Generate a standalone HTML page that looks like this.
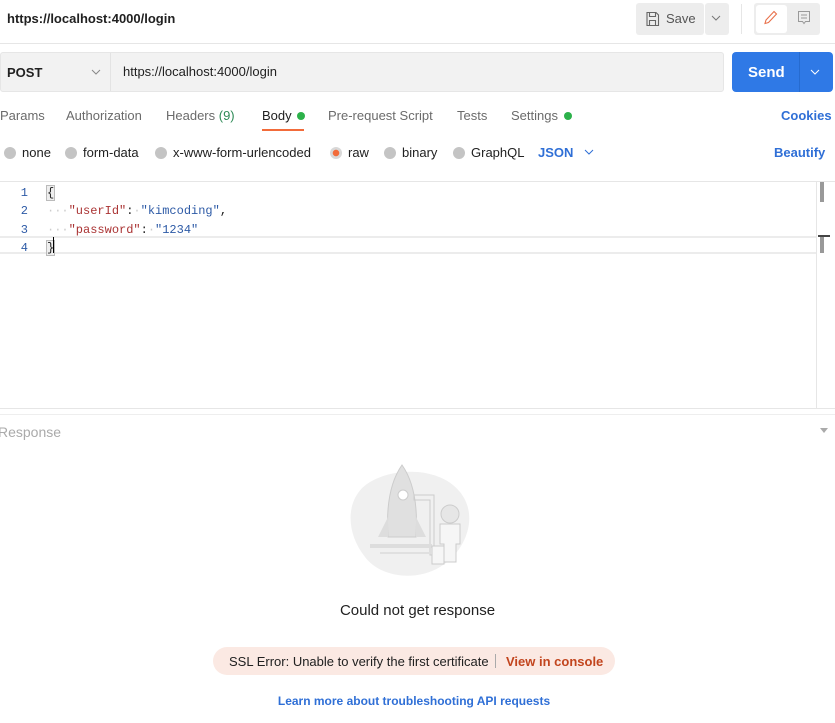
<!DOCTYPE html>
<html><head><meta charset="utf-8"><style>
*{box-sizing:border-box;margin:0;padding:0}
body{width:835px;height:723px;overflow:hidden;background:#fff;font-family:"Liberation Sans",sans-serif;font-size:13px;color:#212121;position:relative}
.a{position:absolute;white-space:nowrap}
.mono{font-family:"Liberation Mono",monospace;font-size:12px}
.dot{display:inline-block;width:12px;height:12px;border-radius:50%;background:#c4c4c4;vertical-align:-2px;margin-right:6px}
</style></head><body>
<div class="a" style="left:7px;top:11px;font-weight:bold;font-size:13px">https://localhost:4000/login</div>
<div class="a" style="left:636px;top:3px;width:68px;height:32px;background:#ededed;border-radius:3px"></div>
<svg class="a" style="left:645px;top:11px" width="15" height="16" viewBox="0 0 15 16"><path d="M2 1.5h9l2.5 2.5v10.5H2z M4.5 1.5v4h6v-4 M4.5 14.5v-5h6v5" fill="none" stroke="#666" stroke-width="1.1"/></svg>
<div class="a" style="left:666px;top:11px;color:#555">Save</div>
<div class="a" style="left:705px;top:3px;width:24px;height:32px;background:#ededed;border-radius:3px"></div>
<svg class="a" style="left:711px;top:15px" width="10" height="7"><path d="M1 1l4 4 4-4" fill="none" stroke="#777"/></svg>
<div class="a" style="left:741px;top:4px;width:1px;height:30px;background:#e6e6e6"></div>
<div class="a" style="left:754px;top:3px;width:66px;height:32px;background:#ededed;border-radius:3px"></div>
<div class="a" style="left:756px;top:5px;width:31px;height:28px;background:#fff;border-radius:3px"></div>
<svg class="a" style="left:763px;top:10px" width="15" height="16"><path d="M11 1.5l2.5 2.5-8 8.5-3.5 1 1-3.5z" fill="none" stroke="#e8704a" stroke-width="1.1"/></svg>
<svg class="a" style="left:797px;top:10px" width="14" height="16"><path d="M1.5 1.5h11v10h-4l-1.5 2-1.5-2h-4z M4 5h6 M4 8h6" fill="none" stroke="#999" stroke-width="1"/></svg>
<div class="a" style="left:0;top:43px;width:835px;height:1px;background:#e6e6e6"></div>

<div class="a" style="left:0;top:52px;width:724px;height:40px;background:#f2f2f2;border:1px solid #e6e6e6;border-radius:3px"></div>
<div class="a" style="left:110px;top:53px;width:1px;height:38px;background:#e3e3e3"></div>
<div class="a" style="left:7px;top:65px;font-weight:bold">POST</div>
<svg class="a" style="left:91px;top:69px" width="10" height="7"><path d="M1 1l4 4 4-4" fill="none" stroke="#888"/></svg>
<div class="a" style="left:123px;top:64px">https://localhost:4000/login</div>
<div class="a" style="left:732px;top:52px;width:101px;height:40px;background:#2f79e6;border-radius:4px"></div>
<div class="a" style="left:799px;top:52px;width:1px;height:40px;background:#266bd0"></div>
<div class="a" style="left:748px;top:64px;color:#fff;font-weight:bold;font-size:15px">Send</div>
<svg class="a" style="left:810px;top:69px" width="10" height="7"><path d="M1 1l4 4 4-4" fill="none" stroke="#fff"/></svg>

<div class="a" style="left:0;top:108px;color:#6b6b6b">Params</div>
<div class="a" style="left:66px;top:108px;color:#6b6b6b">Authorization</div>
<div class="a" style="left:166px;top:108px;color:#6b6b6b">Headers <span style="color:#2e8b57">(9)</span></div>
<div class="a" style="left:262px;top:108px;color:#212121">Body <span style="display:inline-block;width:8px;height:8px;border-radius:50%;background:#2cb14a;margin-left:2px"></span></div>
<div class="a" style="left:262px;top:129px;width:42px;height:2px;background:#f26b3a"></div>
<div class="a" style="left:328px;top:108px;color:#6b6b6b">Pre-request Script</div>
<div class="a" style="left:457px;top:108px;color:#6b6b6b">Tests</div>
<div class="a" style="left:511px;top:108px;color:#6b6b6b">Settings <span style="display:inline-block;width:8px;height:8px;border-radius:50%;background:#2cb14a;margin-left:2px"></span></div>
<div class="a" style="left:781px;top:108px;color:#2f6fd6;font-weight:bold">Cookies</div>

<div class="a" style="left:4px;top:145px"><span class="dot"></span>none</div>
<div class="a" style="left:65px;top:145px"><span class="dot"></span>form-data</div>
<div class="a" style="left:155px;top:145px"><span class="dot"></span>x-www-form-urlencoded</div>
<div class="a" style="left:330px;top:145px"><span class="dot" style="background:radial-gradient(#f26b3a 3px,#d8d8d8 3.5px)"></span>raw</div>
<div class="a" style="left:384px;top:145px"><span class="dot"></span>binary</div>
<div class="a" style="left:453px;top:145px"><span class="dot"></span>GraphQL</div>
<div class="a" style="left:538px;top:145px;color:#2f6fd6;font-weight:bold">JSON</div>
<svg class="a" style="left:584px;top:149px" width="10" height="7"><path d="M1 1l4 4 4-4" fill="none" stroke="#2f6fd6"/></svg>
<div class="a" style="left:774px;top:145px;color:#2f6fd6;font-weight:bold">Beautify</div>

<div class="a" style="left:0;top:181px;width:835px;height:1px;background:#e6e6e6"></div>
<div class="a" style="left:0;top:408px;width:835px;height:1px;background:#e6e6e6"></div>
<div class="a" style="left:816px;top:181px;width:1px;height:228px;background:#e6e6e6"></div>
<div class="a" style="left:820px;top:182px;width:4px;height:20px;background:#999"></div>
<div class="a" style="left:818px;top:235px;width:12px;height:2px;background:#444"></div>
<div class="a" style="left:820px;top:237px;width:4px;height:16px;background:#999"></div>
<div class="a" style="left:0;top:236px;width:816px;height:18px;border-top:2px solid #ececec;border-bottom:2px solid #ececec"></div>
<div class="a mono" style="left:18px;top:184px;color:#2d5aa6;line-height:18.3px;text-align:right;width:10px">1<br>2<br>3<br>4</div>
<div class="a mono" style="left:47px;top:184px;line-height:18.3px"><span style="background:#eee;outline:1px solid #bbb">{</span><br><span style="color:#ccc">···</span><span style="color:#a33">"userId"</span>:<span style="color:#ccc">·</span><span style="color:#2d5aa6">"kimcoding"</span>,<br><span style="color:#ccc">···</span><span style="color:#a33">"password"</span>:<span style="color:#ccc">·</span><span style="color:#2d5aa6">"1234"</span><br><span style="background:#eee;outline:1px solid #bbb">}</span></div>
<div class="a" style="left:53px;top:237px;width:1px;height:16px;background:#000"></div>

<div class="a" style="left:0;top:414px;width:835px;height:1px;background:#eee"></div>
<div class="a" style="left:-2px;top:424px;color:#aaa;font-size:14px">Response</div>
<svg class="a" style="left:820px;top:428px" width="9" height="6"><path d="M0 0h8l-4 5z" fill="#aaa"/></svg>

<svg class="a" style="left:350px;top:462px" width="130" height="115" viewBox="0 0 130 115">
<path d="M20 20c25-15 70-15 90 10c20 25 5 60-20 75c-25 15-60 10-75-10c-20-25-20-60 5-75z" fill="#f0f0f0"/>
<path d="M38 75c-2-30 2-55 14-72c12 17 16 42 14 72z" fill="#e0e0e0" stroke="#ccc"/>
<circle cx="53" cy="33" r="5" fill="#fff" stroke="#ccc"/>
<path d="M38 55l-10 20h10z M66 55l10 20h-10z" fill="#ddd"/>
<path d="M64 33h20v60h-4V38h-16z" fill="none" stroke="#ccc"/>
<rect x="20" y="82" width="62" height="4" fill="#ddd"/>
<rect x="30" y="90" width="50" height="2" fill="#e0e0e0"/>
<circle cx="100" cy="52" r="9" fill="#e6e6e6" stroke="#ccc"/>
<path d="M90 62h20v20h-4v18h-12v-18h-4z" fill="#f6f6f6" stroke="#ccc"/>
<rect x="82" y="84" width="12" height="18" fill="#f6f6f6" stroke="#ccc"/>
</svg>

<div class="a" style="left:0;top:602px;width:835px;text-align:center;font-size:15px;color:#212121">Could not get response</div>
<div class="a" style="left:213px;top:647px;width:402px;height:28px;background:#fbe9e3;border-radius:14px"></div>
<div class="a" style="left:229px;top:654px;color:#212121">SSL Error: Unable to verify the first certificate</div>
<div class="a" style="left:495px;top:654px;width:1px;height:14px;background:#aaa"></div>
<div class="a" style="left:506px;top:654px;color:#c2451e;font-weight:bold">View in console</div>
<div class="a" style="left:0;top:694px;width:828px;text-align:center;color:#2f6fd6;font-weight:bold;font-size:12px">Learn more about troubleshooting API requests</div>
</body></html>
